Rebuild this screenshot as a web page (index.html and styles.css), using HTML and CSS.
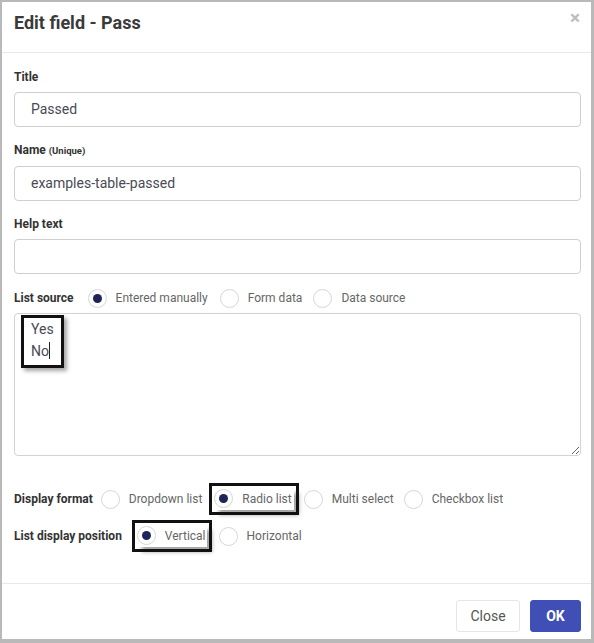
FILE: index.html
```html
<!DOCTYPE html>
<html>
<head>
<meta charset="utf-8">
<link rel="stylesheet" href="styles.css">
</head>
<body>
<div class="modal">
  <header class="modal-header">
    <h1 class="modal-title">Edit field - Pass</h1>
    <span class="close">&times;</span>
  </header>
  <div class="modal-body">
    <div class="field">
      <div class="label">Title</div>
      <div class="input">Passed</div>
    </div>
    <div class="field">
      <div class="label">Name <small>(Unique)</small></div>
      <div class="input">examples-table-passed</div>
    </div>
    <div class="field">
      <div class="label">Help text</div>
      <div class="input"></div>
    </div>
    <div class="radio-row source-row">
      <span class="row-label">List source</span>
      <span class="opt"><span class="radio checked"></span>Entered manually</span>
      <span class="opt"><span class="radio"></span>Form data</span>
      <span class="opt"><span class="radio"></span>Data source</span>
    </div>
    <div class="textarea"><span class="hl-text">Yes<br>No<span class="caret"></span></span></div>
    <div class="radio-row format-row">
      <span class="row-label">Display format</span>
      <span class="opt"><span class="radio"></span>Dropdown list</span>
      <span class="opt hl"><span class="radio checked"></span>Radio list</span>
      <span class="opt"><span class="radio"></span>Multi select</span>
      <span class="opt"><span class="radio"></span>Checkbox list</span>
    </div>
    <div class="radio-row position-row">
      <span class="row-label">List display position</span>
      <span class="opt hl hl-narrow"><span class="radio checked"></span>Vertical</span>
      <span class="opt"><span class="radio"></span>Horizontal</span>
    </div>
  </div>
  <footer class="modal-footer">
    <button class="btn btn-close">Close</button>
    <button class="btn btn-ok">OK</button>
  </footer>
</div>
</body>
</html>
```

FILE: styles.css
```css
* { box-sizing: border-box; }
html, body { margin: 0; padding: 0; background: #fff; }
body { font-family: Roboto, "Noto Sans", Arial, sans-serif; color: #333; }

.modal {
  width: 594px;
  height: 643px;
  border: 2px solid #b9b9b9;
  border-right: 3px solid #b9b9b9;
  border-bottom: 4px solid #b9b9b9;
  background: #fff;
  display: flex;
  flex-direction: column;
}

.modal-header {
  height: 51px;
  padding: 9px 10px 0 12px;
  border-bottom: 1px solid #e8e8e8;
  display: flex;
  justify-content: space-between;
  align-items: flex-start;
}
.modal-title {
  margin: 0;
  font-size: 18px;
  line-height: 24px;
  font-weight: 700;
  color: #3a3a3a;
}
.close {
  font-size: 19px;
  line-height: 14px;
  font-weight: 700;
  color: #bdbdbd;
  margin-right: 1px;
}

.modal-body {
  padding: 16px 10px 0 12px;
  flex: 1;
}

.field { margin-bottom: 15px; }
.label {
  font-size: 12px;
  line-height: 16px;
  font-weight: 700;
  color: #333;
  margin-bottom: 7px;
}
.label small { font-size: 9.5px; font-weight: 700; }

.input {
  height: 35px;
  border: 1px solid #cfcfcf;
  border-radius: 4px;
  padding: 0 16px;
  font-size: 14px;
  line-height: 33px;
  color: #4a4a55;
}

.radio-row {
  display: flex;
  align-items: center;
}
.row-label {
  font-size: 12px;
  font-weight: 700;
  color: #333;
}
.opt {
  display: flex;
  align-items: center;
  font-size: 12px;
  color: #666;
  margin-left: 12px;
}
.radio {
  width: 19px;
  height: 19px;
  border: 1px solid #d6d6d6;
  border-radius: 50%;
  margin-right: 9px;
  display: flex;
  align-items: center;
  justify-content: center;
  background: #fff;
}
.radio.checked::after {
  content: "";
  width: 9px;
  height: 9px;
  border-radius: 50%;
  background: #1f2459;
}
.hl {
  padding: 1px 2px 2px 0;
  outline: 3px solid #111;
  outline-offset: 2px;
  box-shadow: 5px 5px 4px rgba(0,0,0,0.35);
}
.hl-narrow { padding-right: 1px; }

.source-row { height: 20px; margin-top: -1px; }
.source-row .opt { margin-left: 12px; }
.source-row .opt:nth-child(2) { margin-left: 14px; }
.source-row .opt:nth-child(4) { margin-left: 11px; }

.textarea {
  margin-top: 5px;
  height: 143px;
  border: 1px solid #cfd4da;
  border-radius: 4px;
  padding: 0 0 0 6px;
  font-size: 14px;
  line-height: 22px;
  color: #4a4a55;
  overflow: auto;
  resize: both;
}
.hl-text {
  display: inline-block;
  margin-top: 1px;
  padding: 0 7px 3px 7px;
  border: 3px solid #111;
  box-shadow: 3px 3px 4px rgba(0,0,0,0.35);
  line-height: 22px;
  vertical-align: top;
}
.caret {
  display: inline-block;
  width: 1px;
  height: 17px;
  background: #222;
  vertical-align: -3px;
}

.format-row { height: 32px; margin-top: 27px; }
.format-row .opt { margin-left: 10px; }
.format-row .opt:nth-child(2) { margin-left: 8px; }
.format-row .opt.hl { margin-left: 12px; }

.position-row { height: 32px; margin-top: 5px; }
.position-row .opt.hl { margin-left: 15px; }
.position-row .opt:last-child { margin-left: 12px; }

.modal-footer {
  height: 56px;
  border-top: 1px solid #e8e8e8;
  display: flex;
  justify-content: flex-end;
  align-items: flex-start;
  padding: 16px 10px 0 0;
  gap: 10px;
}
.btn {
  height: 32px;
  border-radius: 3px;
  font-family: Roboto, Arial, sans-serif;
  font-size: 14px;
  padding: 0;
}
.btn-close {
  width: 64px;
  background: #fff;
  border: 1px solid #e6e6e6;
  color: #555;
}
.btn-ok {
  width: 51px;
  background: #3f4fb6;
  border: 1px solid #3f4fb6;
  color: #fff;
  font-weight: 700;
}
```
